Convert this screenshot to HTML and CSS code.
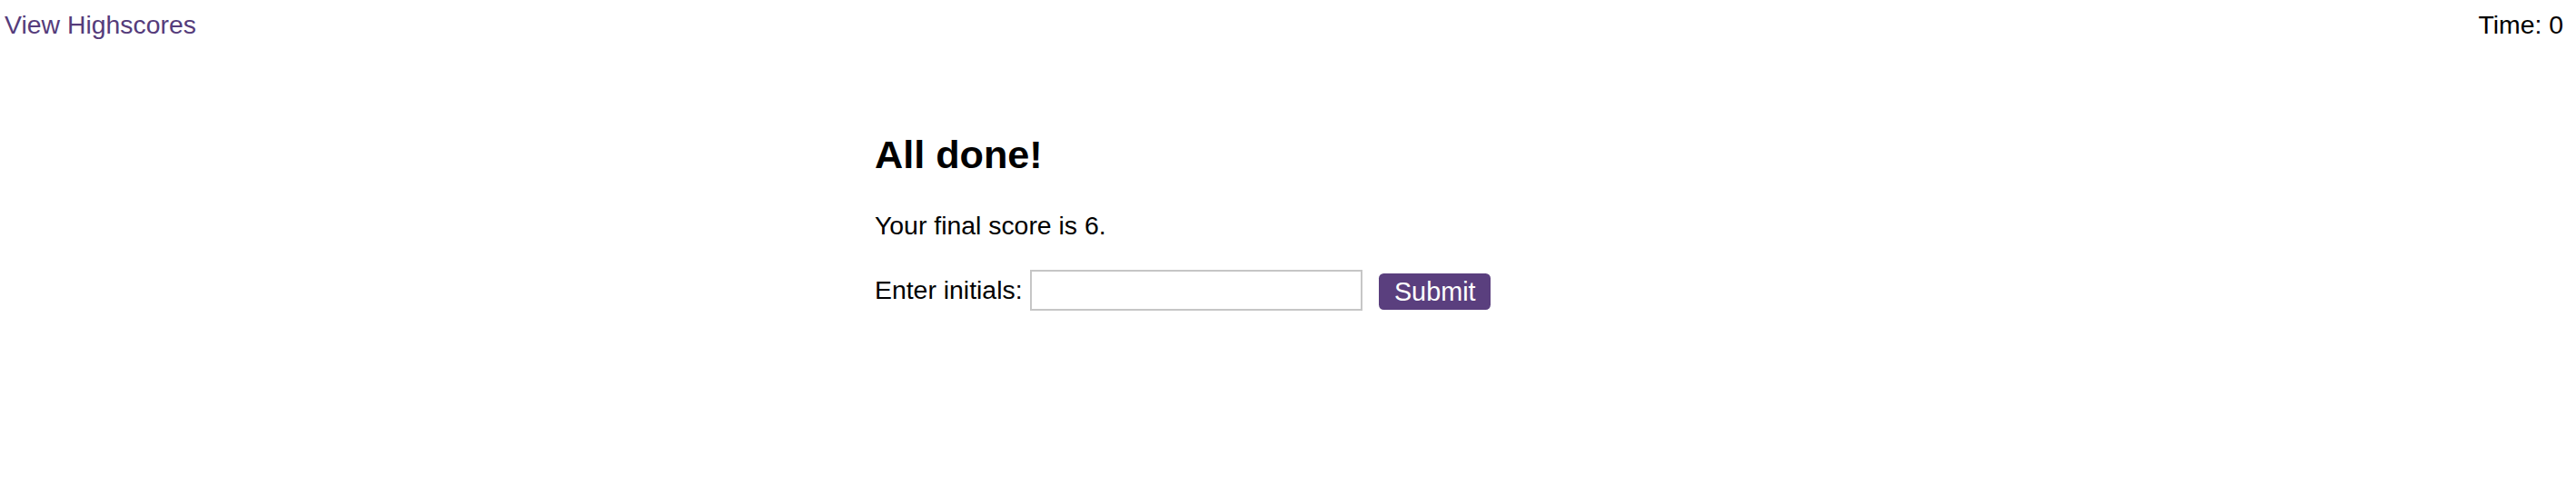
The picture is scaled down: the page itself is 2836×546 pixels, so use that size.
FILE: index.html
```html
<!DOCTYPE html>
<html lang="en">
<head>
<meta charset="utf-8">
<title>Quiz</title>
<link rel="stylesheet" href="styles.css">
</head>
<body>
<header class="topbar">
  <a class="highscores" href="#">View Highscores</a>
  <div class="timer">Time: 0</div>
</header>
<main class="panel">
  <h2 class="title">All done!</h2>
  <p class="score">Your final score is 6.</p>
  <form class="entry" onsubmit="return false;">
    <label class="entry-label" for="initials">Enter initials:</label>
    <input class="entry-input" id="initials" type="text">
    <button class="entry-btn" type="submit">Submit</button>
  </form>
</main>
</body>
</html>
```

FILE: styles.css
```css
html, body {
  margin: 0;
  padding: 0;
  background: #ffffff;
}
body {
  font-family: "Liberation Sans", Arial, sans-serif;
  font-size: 28.4px;
  line-height: 33px;
  color: #000000;
}
.topbar {
  display: flex;
  justify-content: space-between;
  align-items: flex-start;
  padding: 10.5px 14px 0 5px;
}
.highscores {
  color: #553c7b;
  text-decoration: none;
}
.timer {
  color: #000000;
}
.panel {
  width: 910px;
  margin: 0 auto;
}
.title {
  margin: 102px 0 0 0;
  font-size: 43.2px;
  line-height: 49.6px;
  font-weight: bold;
}
.score {
  margin: 36.7px 0 0 0;
}
.entry {
  display: flex;
  align-items: center;
  margin-top: 32.4px;
}
.entry-label {
  margin-right: 8.7px;
}
.entry-input {
  box-sizing: border-box;
  width: 366px;
  height: 45px;
  border: 2px solid #c6c6c6;
  padding: 2px 4px;
  font-family: inherit;
  font-size: 24px;
  margin: 0 18px 0 0;
  background: #ffffff;
}
.entry-btn {
  box-sizing: border-box;
  height: 40px;
  width: 123px;
  margin-top: 3px;
  padding: 0;
  border: none;
  border-radius: 5.4px;
  background: #5a3f7e;
  color: #ffffff;
  font-family: inherit;
  font-size: 28.8px;
  line-height: 33px;
  cursor: pointer;
}
```
